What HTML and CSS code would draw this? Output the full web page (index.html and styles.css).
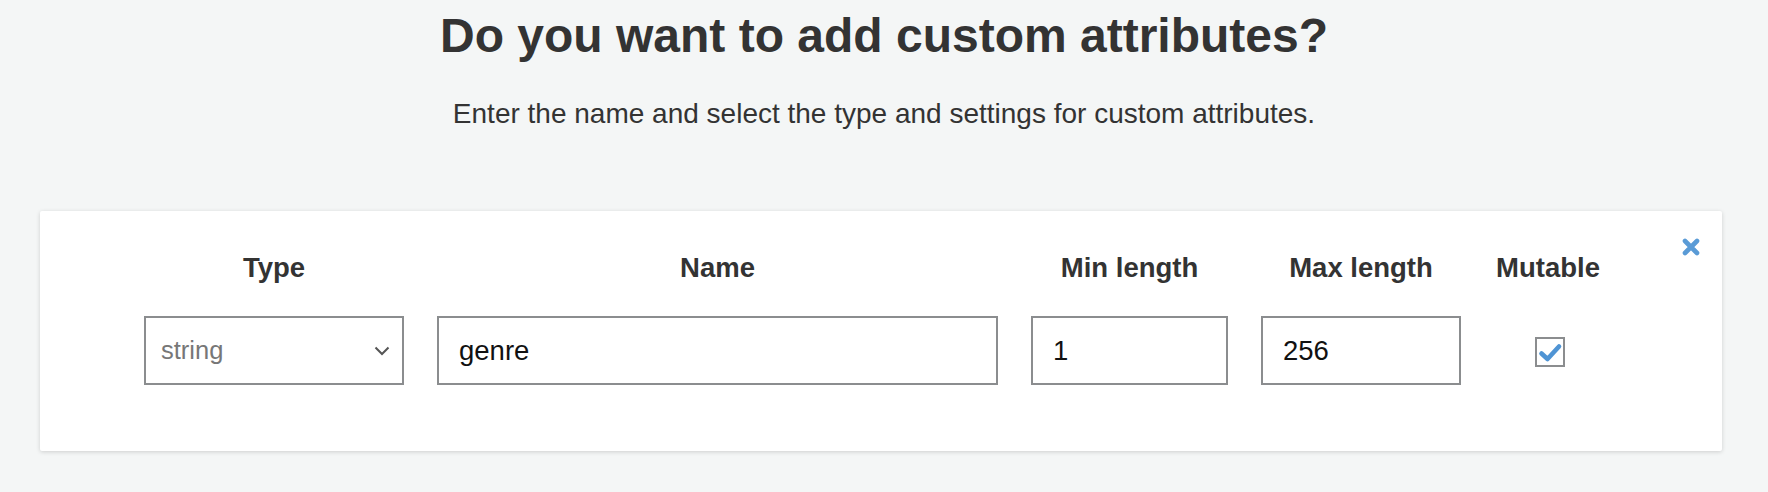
FILE: index.html
```html
<!DOCTYPE html>
<html lang="en">
<head>
<meta charset="utf-8">
<title>Custom attributes</title>
<link rel="stylesheet" href="styles.css">
</head>
<body>
<main class="page">
  <header class="intro">
    <h1 class="title">Do you want to add custom attributes?</h1>
    <p class="subtitle">Enter the name and select the type and settings for custom attributes.</p>
  </header>
  <section class="card">
    <button class="remove" type="button" aria-label="Remove">
      <svg width="18" height="18" viewBox="0 0 18 18"><path d="M3 3 L15 15 M15 3 L3 15" stroke="#5a9bd6" stroke-width="4.6" stroke-linecap="round" fill="none"/></svg>
    </button>
    <div class="grid">
      <div class="label">Type</div>
      <div class="label">Name</div>
      <div class="label">Min length</div>
      <div class="label">Max length</div>
      <div class="label">Mutable</div>

      <div class="field select">
        <span class="select-value">string</span>
        <svg class="chev" width="16" height="10" viewBox="0 0 16 10"><path d="M1.5 1.5 L8 8 L14.5 1.5" stroke="#555" stroke-width="2" fill="none"/></svg>
      </div>
      <div class="field"><span class="value">genre</span></div>
      <div class="field"><span class="value">1</span></div>
      <div class="field"><span class="value">256</span></div>
      <div class="check-cell">
        <span class="checkbox">
          <svg width="26" height="26" viewBox="0 0 26 26"><path d="M4.5 14.5 L10.5 20 L22 7.5" stroke="#4f94d4" stroke-width="4.6" stroke-linecap="round" stroke-linejoin="round" fill="none"/></svg>
        </span>
      </div>
    </div>
  </section>
</main>
</body>
</html>
```
FILE: styles.css
```css
html, body {
  margin: 0;
  padding: 0;
}
body {
  background: #f4f6f6;
  color: #333333;
  font-family: "Liberation Sans", Arial, Helvetica, sans-serif;
}
.page {
  width: 1768px;
  height: 492px;
  overflow: hidden;
  padding: 0 46px 0 40px;
  box-sizing: border-box;
}
.intro {
  text-align: center;
  padding-left: 6px;
}
.title {
  margin: 0;
  padding-top: 8px;
  font-size: 48px;
  line-height: 56px;
  font-weight: bold;
  letter-spacing: 0;
}
.subtitle {
  margin: 0;
  padding-top: 34px;
  font-size: 28px;
  line-height: 32px;
}
.card {
  position: relative;
  margin-top: 81px;
  height: 240px;
  background: #ffffff;
  box-shadow: 0 1px 4px rgba(0, 0, 0, 0.16);
  border-radius: 2px;
  padding: 41px 0 0 104px;
  box-sizing: border-box;
}
.remove {
  position: absolute;
  top: 27px;
  right: 22px;
  border: 0;
  padding: 0;
  background: none;
  width: 18px;
  height: 18px;
  display: block;
}
.remove svg {
  display: block;
}
.grid {
  display: grid;
  grid-template-columns: 260px 561px 197px 200px 108px;
  column-gap: 33px;
  row-gap: 32px;
  align-items: center;
}
.label {
  text-align: center;
  font-weight: bold;
  font-size: 27.5px;
  line-height: 32px;
  color: #333333;
  white-space: nowrap;
}
.field {
  height: 69px;
  border: 2px solid #8b8d8f;
  box-sizing: border-box;
  display: flex;
  align-items: center;
  padding-left: 20px;
  background: #ffffff;
}
.value {
  font-size: 27.5px;
  color: #111111;
}
.select {
  padding-left: 15px;
  padding-right: 12px;
  justify-content: space-between;
}
.select-value {
  font-size: 25.5px;
  color: #777777;
  font-weight: 300;
}
.chev {
  display: block;
}
.check-cell {
  display: flex;
  justify-content: center;
  padding-left: 4px;
  padding-top: 2px;
}
.checkbox {
  width: 30px;
  height: 30px;
  border: 2px solid #8b8d8f;
  box-sizing: border-box;
  display: flex;
  align-items: center;
  justify-content: center;
}
.checkbox svg {
  display: block;
}
```
